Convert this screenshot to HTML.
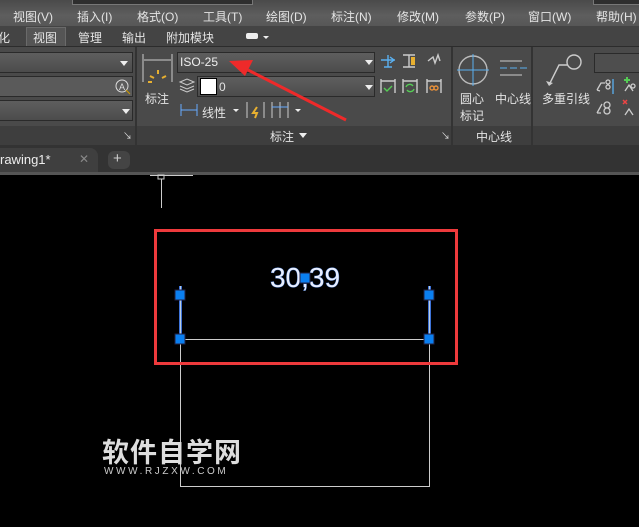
<!DOCTYPE html>
<html><head><meta charset="utf-8"><style>
body{margin:0;width:639px;height:527px;overflow:hidden;background:#000;font-family:"Liberation Sans","Noto Sans CJK SC",sans-serif;position:relative}
.a{position:absolute}
.t{color:#e4e4e4;font-size:12px;white-space:nowrap}
.dd{position:absolute;border:1px solid #2a2a2a;background:linear-gradient(#5e5e5e,#4c4c4c);box-sizing:border-box}
.tri{position:absolute;width:0;height:0;border-left:4px solid transparent;border-right:4px solid transparent;border-top:5px solid #eee}
</style></head><body>
<div class="a" style="left:0;top:0;width:639px;height:26px;background:linear-gradient(#4a4a4a,#5e5e5e 60%,#575757)"></div>
<div class="a" style="left:72px;top:0;width:179px;height:4px;background:#2e2e2e;border:1px solid #777;border-top:0"></div>
<div class="a" style="left:593px;top:0;width:46px;height:4px;background:#2e2e2e;border:1px solid #777;border-top:0"></div>
<div class="t a" style="left:13px;top:8px">视图(V)</div>
<div class="t a" style="left:77px;top:8px">插入(I)</div>
<div class="t a" style="left:137px;top:8px">格式(O)</div>
<div class="t a" style="left:203px;top:8px">工具(T)</div>
<div class="t a" style="left:266px;top:8px">绘图(D)</div>
<div class="t a" style="left:331px;top:8px">标注(N)</div>
<div class="t a" style="left:397px;top:8px">修改(M)</div>
<div class="t a" style="left:465px;top:8px">参数(P)</div>
<div class="t a" style="left:528px;top:8px">窗口(W)</div>
<div class="t a" style="left:596px;top:8px">帮助(H)</div>
<div class="a" style="left:0;top:26px;width:639px;height:20px;background:#444;border-bottom:1px solid #2c2c2c"></div>
<div class="a" style="left:26px;top:27px;width:40px;height:19px;background:#555;border:1px solid #6a6a6a;border-bottom:0;box-sizing:border-box"></div>
<div class="t a" style="left:-2px;top:29px">化</div>
<div class="t a" style="left:33px;top:29px">视图</div>
<div class="t a" style="left:78px;top:29px">管理</div>
<div class="t a" style="left:122px;top:29px">输出</div>
<div class="t a" style="left:166px;top:29px">附加模块</div>
<div class="a" style="left:246px;top:33px;width:12px;height:6px;background:#eee;border-radius:2px"></div>
<div class="tri" style="left:263px;top:36px;border-width:3px 3px 0"></div>
<div class="a" style="left:0;top:47px;width:639px;height:98px;background:#4a4a4a"></div>
<div class="a" style="left:0;top:126px;width:639px;height:19px;background:#3e3e3e"></div>
<div class="a" style="left:135px;top:47px;width:2px;height:98px;background:#333"></div>
<div class="a" style="left:451px;top:47px;width:2px;height:98px;background:#333"></div>
<div class="a" style="left:531px;top:47px;width:2px;height:98px;background:#333"></div>
<div class="dd" style="left:-2px;top:52px;width:135px;height:21px"></div><div class="tri" style="left:120px;top:61px"></div>
<div class="dd" style="left:-2px;top:76px;width:135px;height:21px;background:#5a5a5a"></div>
<svg class="a" style="left:114px;top:78px" width="18" height="18"><circle cx="8" cy="8" r="6" fill="none" stroke="#ddd"/><text x="5" y="12" font-size="9" fill="#ddd">A</text><line x1="12" y1="12" x2="16" y2="16" stroke="#c90"/></svg>
<div class="dd" style="left:-2px;top:100px;width:135px;height:21px"></div><div class="tri" style="left:122px;top:109px"></div>
<div class="t a" style="left:123px;top:129px;font-size:9px">↘</div>
<svg class="a" style="left:140px;top:52px" width="36" height="40"><line x1="3" y1="2" x2="3" y2="30" stroke="#ccc"/><line x1="32" y1="2" x2="32" y2="30" stroke="#ccc"/><line x1="4" y1="8" x2="31" y2="8" stroke="#ccc"/><g stroke="#e8b030" stroke-width="2"><line x1="18" y1="18" x2="18" y2="22"/><line x1="10" y1="24" x2="14" y2="26"/><line x1="26" y1="24" x2="22" y2="26"/><line x1="8" y1="30" x2="12" y2="30"/></g></svg>
<div class="t a" style="left:145px;top:90px">标注</div>
<div class="dd" style="left:177px;top:52px;width:198px;height:21px"></div>
<div class="t a" style="left:180px;top:55px;color:#eee">ISO-25</div><div class="tri" style="left:365px;top:60px"></div>
<svg class="a" style="left:178px;top:77px" width="20" height="16"><path d="M2 5l7-3 7 3-7 3z M2 9l7 3 7-3 M2 12l7 3 7-3" fill="none" stroke="#ccc"/></svg>
<div class="dd" style="left:197px;top:76px;width:178px;height:21px"></div>
<div class="a" style="left:200px;top:78px;width:15px;height:15px;background:#fff;border:1px solid #000"></div>
<div class="t a" style="left:219px;top:80px">0</div><div class="tri" style="left:365px;top:85px"></div>
<svg class="a" style="left:180px;top:102px" width="20" height="16"><line x1="1" y1="2" x2="1" y2="14" stroke="#6af"/><line x1="17" y1="2" x2="17" y2="14" stroke="#6af"/><line x1="1" y1="8" x2="17" y2="8" stroke="#6af"/></svg>
<div class="t a" style="left:202px;top:104px">线性</div><div class="tri" style="left:233px;top:109px;border-width:3px 3px 0"></div>
<svg class="a" style="left:246px;top:101px" width="20" height="18"><line x1="1" y1="1" x2="1" y2="17" stroke="#ccc"/><line x1="18" y1="1" x2="18" y2="17" stroke="#ccc"/><path d="M11 6l-4 6h4l-2 5" stroke="#e8b030" fill="none" stroke-width="2"/></svg>
<svg class="a" style="left:271px;top:101px" width="20" height="18"><g stroke="#ccc"><line x1="1" y1="1" x2="1" y2="17"/><line x1="9" y1="1" x2="9" y2="17"/><line x1="17" y1="1" x2="17" y2="17"/></g><line x1="1" y1="6" x2="17" y2="6" stroke="#6af"/></svg>
<div class="tri" style="left:295px;top:109px;border-width:3px 3px 0"></div>
<div class="t a" style="left:270px;top:128px">标注</div><div class="tri" style="left:299px;top:133px"></div>
<div class="t a" style="left:441px;top:129px;font-size:9px">↘</div>
<svg class="a" style="left:378px;top:52px" width="70" height="46"><g fill="none" stroke-width="1.4"><path d="M3 8h14M12 5l4 3-4 3M10 3v12M6 15h8" stroke="#5ab0f0"/><path d="M25 3h12M25 15h12M31 3v12" stroke="#ccc"/><rect x="33" y="5" width="4" height="8" fill="#e8b030" stroke="none"/><path d="M50 9l5-4 2 6 3-8 2 6" stroke="#ccc"/><path d="M3 27v14M17 27v14M3 29h14M25 27v14M39 27v14M25 29h14M49 27v14M63 27v14M49 29h14" stroke="#ccc"/><path d="M6 36l3 3 5-5" stroke="#5c5"/><path d="M28 35a4 4 0 0 1 7-1M36 37a4 4 0 0 1-7 1" stroke="#5c5"/><path d="M52 36a2 2 0 1 1 4 0a2 2 0 1 1 4 0a2 2 0 1 1-4 0a2 2 0 1 1-4 0" stroke="#e8903a"/></g></svg>
<svg class="a" style="left:456px;top:53px" width="74" height="34"><circle cx="17" cy="17" r="14" fill="none" stroke="#bbb" stroke-width="1.4"/><path d="M17 1v32M1 17h32" stroke="#5ab0f0"/><path d="M44 8h22M44 22h22" stroke="#ccc"/><path d="M44 15h28" stroke="#5ab0f0" stroke-dasharray="7 3"/></svg>
<div class="t a" style="left:460px;top:90px">圆心</div>
<div class="t a" style="left:460px;top:107px">标记</div>
<div class="t a" style="left:495px;top:90px">中心线</div>
<div class="t a" style="left:476px;top:128px">中心线</div>
<svg class="a" style="left:545px;top:53px" width="40" height="36"><circle cx="29" cy="9" r="7" fill="none" stroke="#ccc" stroke-width="1.4"/><path d="M23 12l-9 0-10 20" fill="none" stroke="#ccc" stroke-width="1.4"/><path d="M1 28l3 5 4-3z" fill="#ccc"/></svg>
<div class="t a" style="left:542px;top:90px">多重引线</div>
<div class="dd" style="left:594px;top:53px;width:50px;height:20px;background:#4e4e4e"></div>
<svg class="a" style="left:594px;top:77px" width="45" height="44"><g fill="none" stroke="#ccc" stroke-width="1.3"><path d="M3 13l4-7h4M3 13l3 1"/><circle cx="14" cy="5" r="2"/><circle cx="14" cy="10" r="2"/><line x1="19" y1="2" x2="19" y2="17" stroke="#5ab0f0"/><path d="M31 14l4-6 4 6"/><circle cx="39" cy="9" r="2"/><path d="M3 36l5-9M3 36l4 0"/><circle cx="13" cy="28" r="3"/><circle cx="13" cy="34" r="3"/><path d="M31 38l4-6 4 6"/></g><path d="M30 3h6M33 0v6" stroke="#5c5" stroke-width="2"/><path d="M29 23l4 4M33 23l-4 4" stroke="#e44" stroke-width="1.5"/></svg>
<svg class="a" style="left:0;top:0" width="639" height="175"><line x1="248" y1="70" x2="346" y2="120" stroke="#ee2a2a" stroke-width="3"/><path d="M229 61l24-1-8 16z" fill="#ee2a2a"/></svg>
<div class="a" style="left:0;top:145px;width:639px;height:27px;background:#333"></div>
<div class="a" style="left:-10px;top:148px;width:108px;height:24px;background:#3f3f3f;border-radius:0 8px 0 0"></div>
<div class="t a" style="left:0;top:152px;font-size:13px;color:#eee">rawing1*</div>
<div class="t a" style="left:79px;top:152px;color:#888">✕</div>
<div class="a" style="left:108px;top:151px;width:22px;height:18px;background:#444;border-radius:6px"></div>
<div class="t a" style="left:113px;top:150px;font-size:15px;color:#ccc">+</div>
<div class="a" style="left:0;top:172px;width:639px;height:3px;background:#555"></div>
<svg class="a" style="left:0;top:0" width="639" height="527">
<g stroke="#ccc" fill="none"><line x1="150" y1="175.5" x2="193" y2="175.5"/><rect x="158" y="175" width="6" height="4"/><line x1="161.5" y1="179" x2="161.5" y2="208"/>
<line x1="180.5" y1="339" x2="180.5" y2="486"/><line x1="429.5" y1="339" x2="429.5" y2="486"/><line x1="180" y1="486.5" x2="430" y2="486.5"/><line x1="180" y1="339.5" x2="430" y2="339.5"/></g>
<g stroke="#3e73d8" stroke-width="3"><line x1="180.5" y1="286" x2="180.5" y2="339"/><line x1="429.5" y1="286" x2="429.5" y2="339"/></g>
<g stroke="#bcd" stroke-width="1"><line x1="180.5" y1="286" x2="180.5" y2="339"/><line x1="429.5" y1="286" x2="429.5" y2="339"/></g>
<rect x="155.5" y="230.5" width="301" height="133" fill="none" stroke="#ee3a3c" stroke-width="3"/>
<text x="305" y="287" text-anchor="middle" font-family="Liberation Sans" font-size="28" fill="#e8eeff" stroke="#2a5aa8" stroke-width="0.8" paint-order="stroke">30,39</text>
<g fill="#0a7ff0" stroke="#224" stroke-width="1"><rect x="175" y="290" width="10" height="10"/><rect x="175" y="334" width="10" height="10"/><rect x="424" y="290" width="10" height="10"/><rect x="424" y="334" width="10" height="10"/><rect x="300" y="273" width="10" height="10"/></g>
</svg>
<div class="a" style="left:102px;top:436px;font-size:27px;font-weight:bold;color:#ddd;letter-spacing:1px;font-family:'Noto Sans CJK SC',sans-serif;line-height:30px">软件自学网</div>
<div class="a" style="left:104px;top:466px;font-size:10px;color:#ccc;letter-spacing:2.6px">WWW.RJZXW.COM</div>
</body></html>
